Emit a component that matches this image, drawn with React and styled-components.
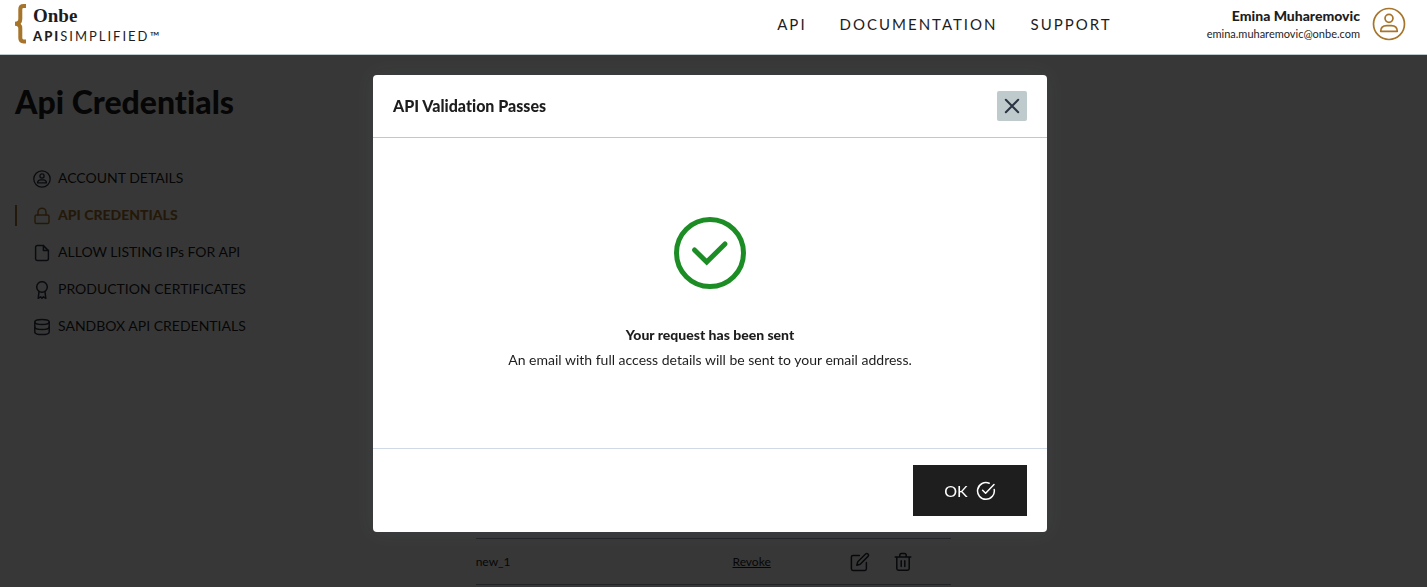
import React from "react";
import styled, { createGlobalStyle, css } from "styled-components";

const GOLD = "#a6752b";
const INK = "#1d1d1d";

const GlobalStyle = createGlobalStyle`
  * { box-sizing: border-box; }
  body {
    margin: 0;
    background: #fff;
    color: ${INK};
    font-family: Lato, "Liberation Sans", sans-serif;
    font-variant-ligatures: none;
  }
  h1, h2, p, ul { margin: 0; padding: 0; }
  a { color: inherit; text-decoration: none; }
  button { font-family: inherit; border: 0; cursor: pointer; }
`;

const TopBar = styled.header`
  position: relative;
  z-index: 20;
  display: flex;
  align-items: flex-start;
  justify-content: space-between;
  height: 55px;
  padding: 0 21px 0 15px;
  background: #fff;
  border-bottom: 1px solid #bfc9cb;
`;

const Logo = styled.a`
  display: flex;
  gap: 7px;
  padding-top: 4px;
`;

const LogoText = styled.span`
  display: flex;
  flex-direction: column;
`;

const LogoName = styled.span`
  font: bold 19px/23px "Liberation Serif", serif;
`;

const LogoTag = styled.span`
  font-size: 13px;
  line-height: 18px;
  letter-spacing: 2px;
  b { font-weight: 900; }
`;

const TopRight = styled.div`
  display: flex;
  gap: 95px;
`;

const TopNav = styled.nav`
  display: flex;
  gap: 33px;
  padding-top: 12px;
  font-size: 15px;
  line-height: 24px;
  letter-spacing: 2px;
`;

const User = styled.div`
  display: flex;
  gap: 12px;
  padding-top: 7px;
  text-align: right;
`;

const UserName = styled.div`
  font-size: 14px;
  font-weight: 900;
  line-height: 17px;
`;

const UserMail = styled.div`
  font-size: 11px;
  line-height: 20px;
`;

const Page = styled.main`
  padding: 24px 0 0;
`;

const Title = styled.h1`
  padding-left: 15px;
  font-size: 32px;
  font-weight: 900;
  line-height: 46px;
`;

const Columns = styled.div`
  display: grid;
  grid-template-columns: repeat(3, minmax(0, 1fr));
`;

const Menu = styled.ul`
  list-style: none;
  padding: 35px 0 0 15px;
`;

const MenuItem = styled.li`
  height: 37px;
  display: flex;
  align-items: center;
`;

const MenuLink = styled.a`
  display: flex;
  align-items: center;
  gap: 7px;
  height: 21px;
  padding-left: 16px;
  border-left: 2px solid transparent;
  font-size: 14px;
  line-height: 18px;
  svg { color: #2b3444; }
  ${({ $active }) =>
    $active &&
    css`
      border-color: ${GOLD};
      color: ${GOLD};
      font-weight: 900;
      svg { color: ${GOLD}; }
    `}
`;

const MenuLabel = styled.span`
  padding-bottom: 2px;
`;

const KeyTable = styled.table`
  width: 100%;
  margin-top: 413px;
  border-collapse: collapse;
  table-layout: fixed;
  font-size: 12px;
  td {
    height: 46px;
    padding: 0;
    border-top: 1px solid #9aa8b4;
    border-bottom: 1px solid #9aa8b4;
  }
`;

const NameCol = styled.col`
  width: 54%;
`;

const Revoke = styled.button`
  padding: 0;
  background: none;
  color: ${INK};
  font-size: 12px;
  text-decoration: underline;
`;

const Actions = styled.div`
  display: flex;
  justify-content: flex-end;
  gap: 23px;
  padding-right: 38px;
`;

const IconButton = styled.button`
  display: flex;
  padding: 0;
  background: none;
  color: #1d2733;
`;

const Overlay = styled.div`
  position: fixed;
  inset: 55px 0 0;
  z-index: 10;
  display: flex;
  align-items: flex-start;
  justify-content: center;
  padding: 20px 7px 0 0;
  background: rgba(0, 0, 0, 0.785);
`;

const Dialog = styled.section`
  width: min(674px, 94vw);
  background: #fff;
  border-radius: 4px;
  box-shadow: 0 0 20px rgba(110, 130, 150, 0.1);
`;

const DialogHead = styled.header`
  display: flex;
  align-items: center;
  justify-content: space-between;
  padding: 16px 20px;
  border-bottom: 1px solid #bfc9cb;
`;

const DialogTitle = styled.h2`
  font-size: 16px;
  font-weight: 900;
  line-height: 24px;
`;

const CloseButton = styled.button`
  display: grid;
  place-items: center;
  width: 30px;
  height: 30px;
  padding: 0;
  border-radius: 2px;
  background: #bfcacc;
  color: #2b3444;
`;

const DialogBody = styled.div`
  display: flex;
  flex-direction: column;
  align-items: center;
  padding: 79px 20px 76px;
  text-align: center;
  svg { margin-bottom: 33px; }
`;

const Message = styled.p`
  font-size: 14px;
  line-height: 25px;
  font-weight: ${({ $strong }) => ($strong ? 900 : 400)};
`;

const DialogFoot = styled.footer`
  display: flex;
  justify-content: flex-end;
  padding: 16px 20px;
  border-top: 1px solid #d0dae6;
`;

const OkButton = styled.button`
  display: flex;
  align-items: center;
  justify-content: center;
  gap: 8px;
  width: 114px;
  height: 51px;
  background: #1e1e1e;
  color: #fff;
  font-size: 16px;
`;

const Line = ({ size = 18, box = 18, width = 1.5, children }) => (
  <svg
    width={size}
    height={size}
    viewBox={`0 0 ${box} ${box}`}
    fill="none"
    stroke="currentColor"
    strokeWidth={width}
    strokeLinecap="round"
    strokeLinejoin="round"
    aria-hidden="true"
  >
    {children}
  </svg>
);

const Brace = () => (
  <svg width="11" height="40" viewBox="0 0 11 40" fill="none" stroke={GOLD} strokeWidth="4" aria-hidden="true">
    <path d="M11 2H8.6C6.2 2 5.3 3 5.3 5.2V15C5.3 18 3.6 19.8 0 19.8C3.6 19.8 5.3 21.6 5.3 24.6V34C5.3 36.2 6.2 37.4 8.6 37.4H11" />
  </svg>
);

const PersonRing = ({ size, box = 18, width }) => (
  <Line size={size} box={box} width={width}>
    <circle cx="9" cy="9" r="8.2" />
    <circle cx="9" cy="6" r="2.1" />
    <path d="M4.6 12.9C4.6 10.8 6 9.9 7.8 9.9H10.2C12 9.9 13.4 10.8 13.4 12.9Z" />
  </Line>
);

const Lock = () => (
  <Line>
    <rect x="2" y="8" width="14" height="8.6" rx="1.6" />
    <path d="M5 8V5.2a4 4 0 0 1 8 0V8" />
  </Line>
);

const FileIcon = () => (
  <Line>
    <path d="M10.4 1.6H4.2A1.6 1.6 0 0 0 2.6 3.2V14.8A1.6 1.6 0 0 0 4.2 16.4H13.8A1.6 1.6 0 0 0 15.4 14.8V6.6Z" />
    <path d="M10.4 1.6V6.6H15.4" />
  </Line>
);

const Ribbon = () => (
  <Line>
    <circle cx="9" cy="6" r="5.3" />
    <path d="M6 10.6L5.2 17.3L7.6 15.8L9 17.3L10.4 15.8L12.8 17.3L12 10.6" />
  </Line>
);

const Disks = () => (
  <Line>
    <ellipse cx="9" cy="3.9" rx="7.2" ry="2.5" />
    <path d="M1.8 3.9V14C1.8 15.5 5 16.6 9 16.6S16.2 15.5 16.2 14V3.9" />
    <path d="M1.8 9C1.8 10.4 5 11.5 9 11.5S16.2 10.4 16.2 9" />
  </Line>
);

const Edit = () => (
  <Line size={20} box={20}>
    <path d="M9.4 3.4H3A1.6 1.6 0 0 0 1.4 5V16.8A1.6 1.6 0 0 0 3 18.4H14.8A1.6 1.6 0 0 0 16.4 16.8V10.6" />
    <path d="M15.6 2A1.7 1.7 0 0 1 18 4.4L10.2 12.2L6.8 13.2L7.8 9.8Z" />
  </Line>
);

const Trash = () => (
  <Line size={20} box={20}>
    <path d="M2.2 4.9H17.8M6.8 4.7V3A1.4 1.4 0 0 1 8.2 1.6H11.8A1.4 1.4 0 0 1 13.2 3V4.7M3.8 4.9V16.6A1.6 1.6 0 0 0 5.4 18.2H14.6A1.6 1.6 0 0 0 16.2 16.6V4.9M8.2 8.8V14.4M11.8 8.8V14.4" />
  </Line>
);

const menu = [
  { label: "ACCOUNT DETAILS", icon: <PersonRing size={18} width={1.3} /> },
  { label: "API CREDENTIALS", icon: <Lock />, active: true },
  { label: "ALLOW LISTING IPs FOR API", icon: <FileIcon /> },
  { label: "PRODUCTION CERTIFICATES", icon: <Ribbon /> },
  { label: "SANDBOX API CREDENTIALS", icon: <Disks /> },
];

const Avatar = styled.span`
  display: flex;
  color: ${GOLD};
`;

export default function App() {
  return (
    <>
      <GlobalStyle />
      <TopBar>
        <Logo href="#home">
          <Brace />
          <LogoText>
            <LogoName>Onbe</LogoName>
            <LogoTag><b>API</b>SIMPLIFIED™</LogoTag>
          </LogoText>
        </Logo>
        <TopRight>
          <TopNav>
            <a href="#api">API</a>
            <a href="#documentation">DOCUMENTATION</a>
            <a href="#support">SUPPORT</a>
          </TopNav>
          <User>
            <div>
              <UserName>Emina Muharemovic</UserName>
              <UserMail>emina.muharemovic@onbe.com</UserMail>
            </div>
            <Avatar><PersonRing size={34} width={0.9} /></Avatar>
          </User>
        </TopRight>
      </TopBar>

      <Page>
        <Title>Api Credentials</Title>
        <Columns>
          <nav>
            <Menu>
              {menu.map((item) => (
                <MenuItem key={item.label}>
                  <MenuLink href="#section" $active={item.active}>
                    {item.icon}
                    <MenuLabel>{item.label}</MenuLabel>
                  </MenuLink>
                </MenuItem>
              ))}
            </Menu>
          </nav>
          <KeyTable>
            <colgroup>
              <NameCol />
              <col />
              <col />
            </colgroup>
            <tbody>
              <tr>
                <td>new_1</td>
                <td><Revoke type="button">Revoke</Revoke></td>
                <td>
                  <Actions>
                    <IconButton type="button" aria-label="Edit"><Edit /></IconButton>
                    <IconButton type="button" aria-label="Delete"><Trash /></IconButton>
                  </Actions>
                </td>
              </tr>
            </tbody>
          </KeyTable>
        </Columns>
      </Page>

      <Overlay>
        <Dialog role="dialog" aria-modal="true" aria-labelledby="dialog-title">
          <DialogHead>
            <DialogTitle id="dialog-title">API Validation Passes</DialogTitle>
            <CloseButton type="button" aria-label="Close">
              <Line size={16} box={16} width={2}>
                <path d="M1.8 1.8L14.2 14.2M14.2 1.8L1.8 14.2" />
              </Line>
            </CloseButton>
          </DialogHead>
          <DialogBody>
            <svg width="72" height="72" viewBox="0 0 72 72" fill="none" stroke="#1c8c24" strokeWidth="5" aria-hidden="true">
              <circle cx="36" cy="36" r="33.5" />
              <path d="M20.5 33L32.7 45L51 27" strokeLinecap="round" />
            </svg>
            <Message $strong>Your request has been sent</Message>
            <Message>An email with full access details will be sent to your email address.</Message>
          </DialogBody>
          <DialogFoot>
            <OkButton type="button">
              OK
              <Line size={20} box={20} width={1.5}>
                <path d="M18.2 8.4A8.4 8.4 0 1 1 13.2 2.2" />
                <path d="M6.6 9.2L9.6 12.2L18 3.6" />
              </Line>
            </OkButton>
          </DialogFoot>
        </Dialog>
      </Overlay>
    </>
  );
}
